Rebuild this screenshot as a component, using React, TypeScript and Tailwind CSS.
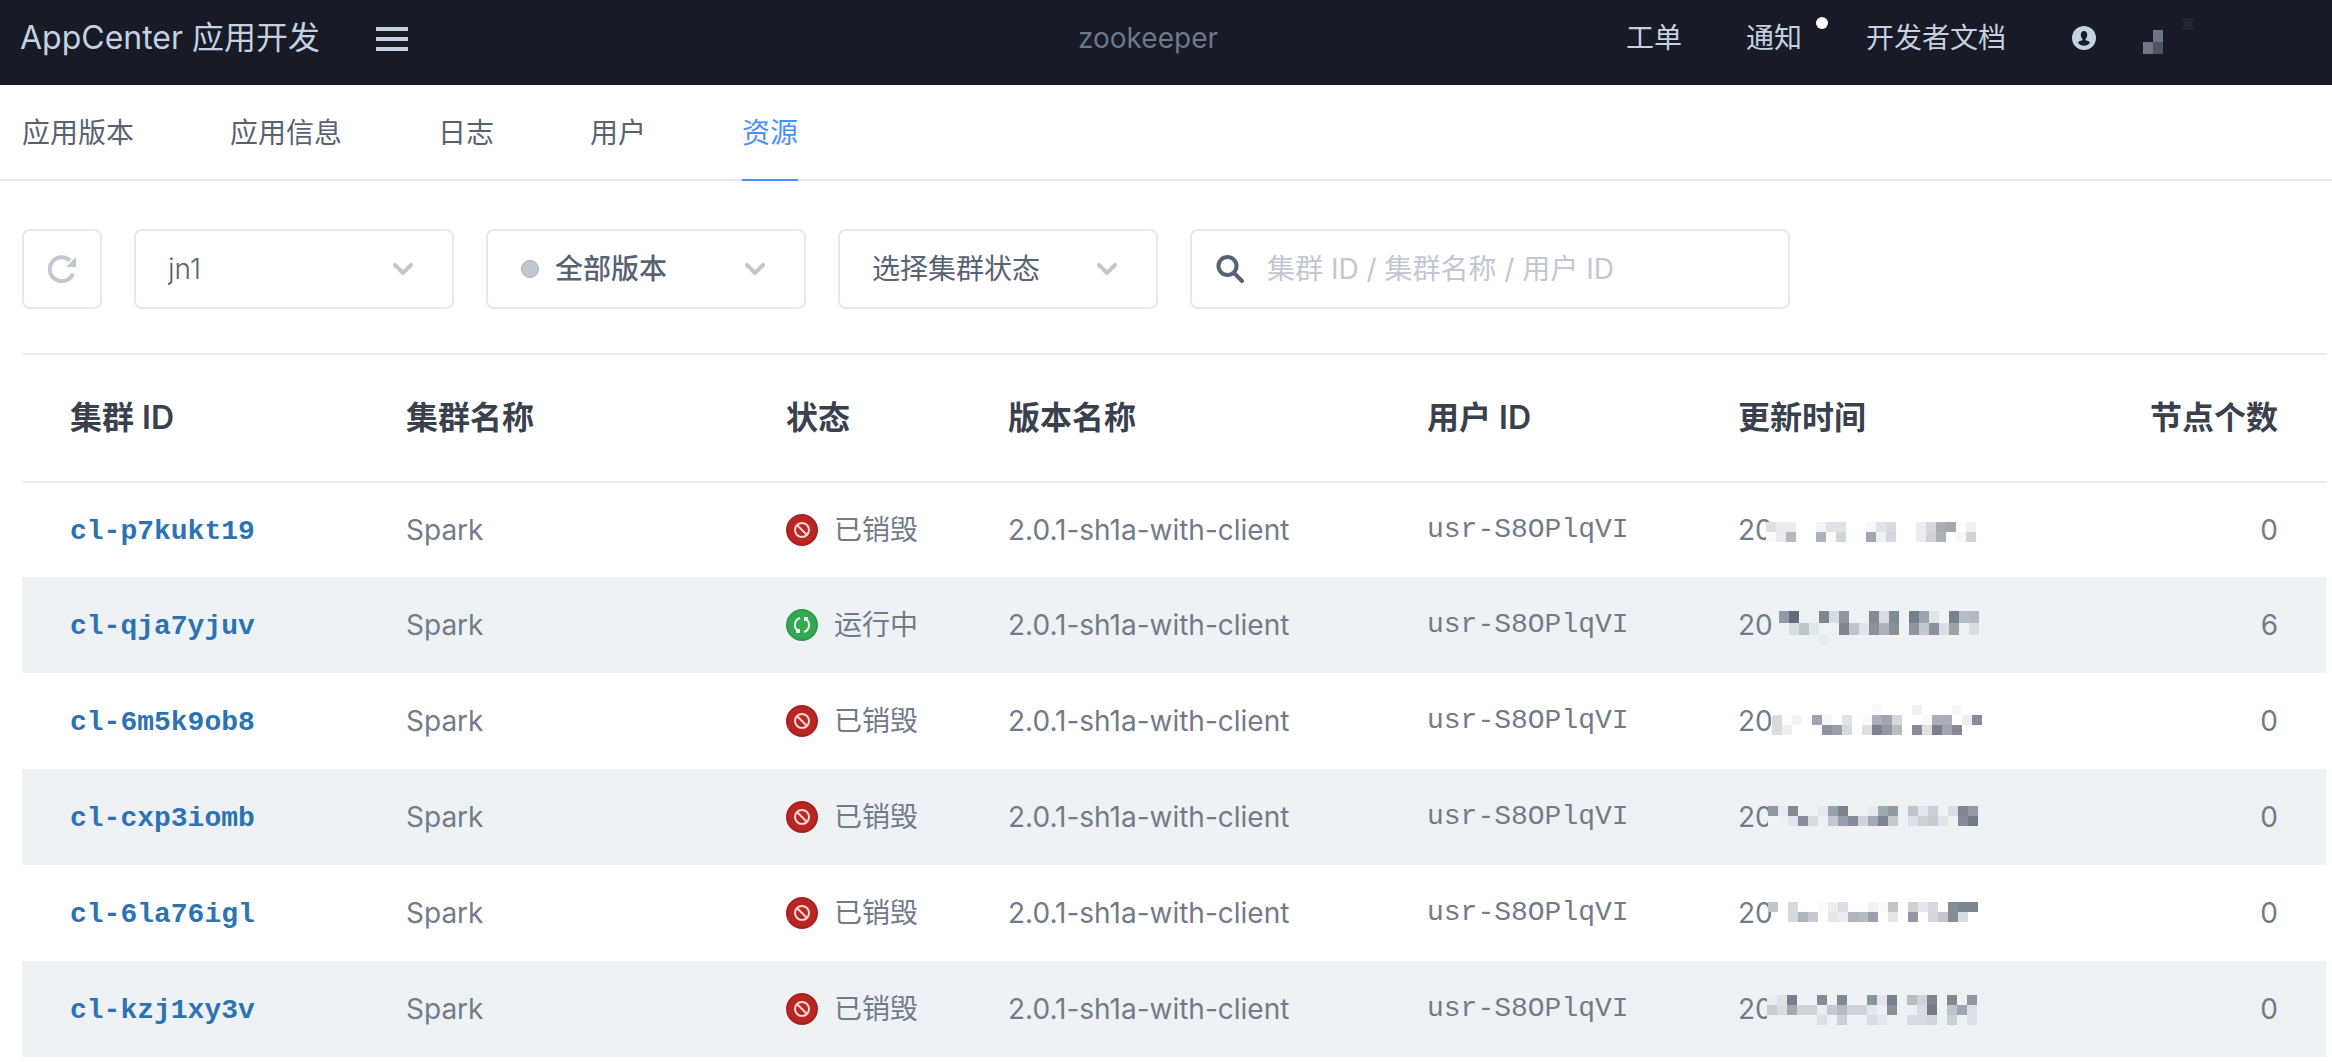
import React from "react";

const sans = "font-['Inter','Noto_Sans_CJK_SC',sans-serif]";
const mono = "font-['Liberation_Mono',monospace]";

type Mosaic = { x: number; y: number; h: number; lines: string[] };

type Cluster = {
  id: string;
  status: "ceased" | "active";
  nodes: number;
  mask: Mosaic;
};

const clusters: Cluster[] = [
  {
    id: "cl-p7kukt19",
    status: "ceased",
    nodes: 0,
    mask: {
      x: 28,
      y: 12,
      h: 10,
      lines: [
        "dfe0e4 ebecee ebecee - - f3f4f7 e0e2e6 e0e2e6 - - f7f8fb e0e2e7 dad9df - - ebecf0 d4d8dd a8aeb2 a2a7b0 fbfefc f0f0f0",
        "f8fbfa ebebed b6babe - - adb1ba f8fbfa d0d4da - - 9ea6af eff0f2 d4d7de - - ebebf0 cfd3d7 abb1b5 - f6f7fb cfd4d8",
      ],
    },
  },
  {
    id: "cl-qja7yjuv",
    status: "active",
    nodes: 6,
    mask: {
      x: 31,
      y: 6,
      h: 12,
      lines: [
        "- 939aa5 616b79 - - 808790 d8dbe0 8e959f - - 808a92 dadbe1 808a92 - 767d8b 9da2ad dfe4e8 f0f2f6 76828e b5bec8 b4b9c1",
        "- - d8dde1 bfc3cc e2e7ec eff3f3 - 7e8490 bfc3cc e2e4e9 8b919b adb1ba 869096 - 9195a2 c4c8cf 8b929d dadee3 9ba4aa eff1f5 d8dee6",
        "- - - - - e5ecee",
      ],
    },
  },
  {
    id: "cl-6m5k9ob8",
    status: "ceased",
    nodes: 0,
    mask: {
      x: 34,
      y: 4,
      h: 10,
      lines: [
        "- - - - - - - - - - fafafc - - - f0f1f4 - - - f5f6f6",
        "d8dbdd - f5f5f6 - 9fa5af f5f8f7 - dfe4e7 - fafbfb abb1ba a1a5ae d6d8db - - f9fbf9 a9b0b8 abaeb6 - eeeeef 858b98",
        "d8dbdd edeff2 - - - 8d949f 9b9faa d6dadd - dfe0e4 7d828f 9297a2 b9bdc0 - 868e9b e0e0e1 7c808d a1a5af 848996",
      ],
    },
  },
  {
    id: "cl-cxp3iomb",
    status: "ceased",
    nodes: 0,
    mask: {
      x: 30,
      y: 9,
      h: 10,
      lines: [
        "8f98a0 e7eaee 838998 - - e6eaee 9aa1ac 7b818d - - e6eaee a2a9b1 929aa4 - c0c4cf e3e6ea cbcfd3 - dadde2 7f8592 9699a6",
        "eff2f6 - e3e6ea 898c9c d6dcdf - c4c8d1 989fa8 868b99 d0d3d9 a2aab3 7e848f c5cacf - dde2e6 cdd1d5 c7cbd4 e4e5e9 - 868c97 737986",
      ],
    },
  },
  {
    id: "cl-6la76igl",
    status: "ceased",
    nodes: 0,
    mask: {
      x: 30,
      y: 9,
      h: 10,
      lines: [
        "c2c6cb - d6dade - - fafafb ecedee dadee2 - - eff3f5 f7fafb c1c5ca - ccd1d5 e5e6e9 d6dae3 - 868f98 7d8690 7b858f",
        "- - d6dade b0b4bd c7cbce - e3e8ec ededef b0b4bd b6bbc0 9ba1aa - e5e9eb - 9398a3 - d5d9de c6c6cd 858d98 d9dce0",
      ],
    },
  },
  {
    id: "cl-kzj1xy3v",
    status: "ceased",
    nodes: 0,
    mask: {
      x: 29,
      y: 6,
      h: 10,
      lines: [
        "e9edf1 dfe2e7 76808c - - 848d96 - 7f8a92 - - 8b939d e2e5ea 77808c - b8bdc4 cfd3d7 7d858f - 7f8a90 - 9097a3",
        "c8ccd5 d9dce0 a2a9b1 cfd2d8 cfd2d8 e9edf0 c5cad0 b5bcc0 cfd3d8 cfd2d8 e3e6eb eceff3 8b919c - eceff3 d8dbe0 747a89 - bfc3cd a0a4af dddfe5",
        "eff2f5 - - - - dae0e3 - cbd0d5 - - d8dde1 e4e7eb - - d8dbe0 d8dbe0 d3d6dc - cbd0d6 - dde0e4",
      ],
    },
  },
];

function MaskedTime({ mask }: { mask: Mosaic }) {
  return (
    <div className="relative flex h-10 items-center">
      20
      <svg
        className="absolute top-0 left-0"
        width="250"
        height="40"
        viewBox="0 0 250 40"
        shapeRendering="crispEdges"
        aria-hidden="true"
      >
        {mask.lines.map((line, r) =>
          line.split(" ").map((c, k) =>
            c === "-" ? null : (
              <rect
                key={`${r}-${k}`}
                x={mask.x + k * 10}
                y={mask.y + r * mask.h}
                width="10"
                height={mask.h}
                fill={`#${c}`}
              />
            ),
          ),
        )}
      </svg>
    </div>
  );
}

function StatusIcon({ status }: { status: Cluster["status"] }) {
  if (status === "active") {
    return (
      <svg width="32" height="32" viewBox="0 0 32 32" fill="none" aria-hidden="true">
        <circle cx="16" cy="16" r="15" fill="#34a853" stroke="#2c9a49" strokeWidth="2" />
        <path
          d="M14 9 A7.3 7.3 0 0 0 11.5 21.5 M18 23 A7.3 7.3 0 0 0 20.5 10.5"
          stroke="#f2fbf4"
          strokeWidth="2"
        />
        <path d="M18 8h4v4h-4z M10 20h4v4h-4z" fill="#f2fbf4" />
      </svg>
    );
  }
  return (
    <svg width="32" height="32" viewBox="0 0 32 32" fill="none" aria-hidden="true">
      <circle cx="16" cy="16" r="15" fill="#b82723" stroke="#a9201d" strokeWidth="2" />
      <circle cx="16" cy="16" r="7" stroke="#f6d9d8" strokeWidth="2" />
      <path d="M11 11l10 10" stroke="#f6d9d8" strokeWidth="2" />
    </svg>
  );
}

function Chevron() {
  return (
    <svg
      className="pointer-events-none absolute top-1/2 right-[41px] -translate-y-1/2"
      width="20"
      height="12"
      viewBox="0 0 20 12"
      fill="none"
      aria-hidden="true"
    >
      <path
        d="M2 2l8 8 8-8"
        stroke="#c1c8d1"
        strokeWidth="4"
        strokeLinecap="round"
        strokeLinejoin="round"
      />
    </svg>
  );
}

function Filter({
  label,
  value,
  dot = false,
  className,
}: {
  label: string;
  value: string;
  dot?: boolean;
  className: string;
}) {
  return (
    <div className="relative w-80">
      {dot && (
        <span className="pointer-events-none absolute top-1/2 left-[35px] size-[18px] -translate-y-1/2 rounded-full border border-[#a4adb8] bg-[#c1c8d1]" />
      )}
      <select
        aria-label={label}
        className={`h-20 w-full appearance-none rounded-lg border-2 border-[#e5e9ee] bg-white text-[28px] text-[#576372] outline-none ${className}`}
      >
        <option>{value}</option>
      </select>
      <Chevron />
    </div>
  );
}

const tabs = ["应用版本", "应用信息", "日志", "用户", "资源"];

export default function App() {
  return (
    <div className={`min-h-screen bg-white text-[28px] leading-10 ${sans}`} lang="zh-CN">
      <header className="grid h-[85px] grid-cols-[1fr_auto_1fr] items-center bg-[#181a26] pr-14 pb-[9px] pl-5 text-[#c3d1e0]">
        <div className="flex items-center gap-14">
          <h1 className="text-[32px] whitespace-nowrap">AppCenter 应用开发</h1>
          <button type="button" aria-label="菜单" className="mt-[2px] flex w-8 flex-col gap-[6px]">
            <span className="h-1 bg-[#c3d1e0]" />
            <span className="h-1 bg-[#c3d1e0]" />
            <span className="h-1 bg-[#c3d1e0]" />
          </button>
        </div>
        <p className="text-[#6f7886]">zookeeper</p>
        <nav className="flex items-center justify-end gap-16 pr-[83px] whitespace-nowrap">
          <a href="#tickets">工单</a>
          <a href="#notices" className="relative">
            通知
            <span className="absolute -top-px -right-[26px] size-3 rounded-full bg-white" />
          </a>
          <a href="#docs">开发者文档</a>
          <a href="#account" aria-label="账户" className="flex items-center gap-[47px] pl-[2px]">
            <svg width="24" height="24" viewBox="0 0 24 24" aria-hidden="true">
              <circle cx="12" cy="12" r="12" fill="#c3d1e0" />
              <path
                d="M12 5c-2 0-3.200 1.500-3.200 3.700 0 1.900.7 3.300 1.700 4.200v1.300c-2.400.5-4.500 1.300-4.500 2.600 1.500 1.900 3.600 3 6 3s4.500-1.100 6-3c0-1.300-2.100-2.100-4.500-2.600v-1.300c1-.9 1.700-2.300 1.700-4.200C15.200 6.500 14 5 12 5z"
                fill="#181a26"
              />
            </svg>
            <svg
              width="50"
              height="40"
              viewBox="0 0 50 40"
              shapeRendering="crispEdges"
              aria-hidden="true"
            >
              <path d="M40 0h10v12H40z" fill="#232532" />
              <path d="M10 12h10v12H10z" fill="#6e7385" />
              <path d="M0 24h10v12H0z" fill="#6f7887" />
              <path d="M10 24h10v12H10z" fill="#505566" />
            </svg>
          </a>
        </nav>
      </header>

      <nav className="flex h-24 gap-24 border-b-2 border-[#e5e9ee] px-[22px] text-[#576372]">
        {tabs.map((tab) => (
          <a
            key={tab}
            href={`#${tab}`}
            className={
              tab === "资源"
                ? "-mb-[2px] border-b-2 border-[#4791ff] pt-7 text-[#4791ff]"
                : "pt-7"
            }
          >
            {tab}
          </a>
        ))}
      </nav>

      <main className="pt-12 pr-[6px] pl-[22px]">
        <form className="flex gap-8">
          <button
            type="button"
            aria-label="刷新"
            className="flex size-20 items-center justify-center rounded-lg border-2 border-[#e5e9ee] bg-white"
          >
            <svg width="28" height="28" viewBox="0 0 28 28" fill="none" aria-hidden="true">
              <path
                d="M25 18.500A12 12 0 1 1 22 5.500"
                stroke="#c1c8d1"
                strokeWidth="4"
              />
              <path d="M28 2v10H18z" fill="#c1c8d1" />
            </svg>
          </button>
          <Filter label="区域" value="jn1" className="pl-8 font-light" />
          <Filter label="版本" value="全部版本" dot className="pl-[67px] font-medium" />
          <Filter label="集群状态" value="选择集群状态" className="pl-8" />
          <div className="relative w-[600px]">
            <svg
              className="pointer-events-none absolute top-1/2 left-[26px] -translate-y-1/2"
              width="28"
              height="28"
              viewBox="0 0 28 28"
              fill="none"
              aria-hidden="true"
            >
              <circle cx="11.500" cy="11" r="9" stroke="#576372" strokeWidth="4" />
              <path d="M18 18l8 8" stroke="#576372" strokeWidth="4" strokeLinecap="round" />
            </svg>
            <input
              type="search"
              aria-label="搜索集群"
              placeholder="集群 ID / 集群名称 / 用户 ID"
              className="h-20 w-full rounded-lg border-2 border-[#e5e9ee] bg-white pr-8 pl-[75px] text-[28px] text-[#576372] outline-none placeholder:text-[#c1c8d1]"
            />
          </div>
        </form>

        <table className="mt-11 w-full table-fixed border-separate border-spacing-0 text-left whitespace-nowrap text-[#717b8a]">
          <colgroup>
            <col className="w-[336px]" />
            <col className="w-[380px]" />
            <col className="w-[222px]" />
            <col className="w-[419px]" />
            <col className="w-[311px]" />
            <col />
            <col className="w-[240px]" />
          </colgroup>
          <thead>
            <tr className="h-32 text-[32px] text-[#3a414d] [&>th]:border-t-2 [&>th]:border-[#e9edf0] [&>th]:p-0 [&>th]:pl-12 [&>th]:font-semibold">
              <th scope="col">集群 ID</th>
              <th scope="col">集群名称</th>
              <th scope="col">状态</th>
              <th scope="col">版本名称</th>
              <th scope="col">用户 ID</th>
              <th scope="col">更新时间</th>
              <th scope="col" className="pr-12! text-right">
                节点个数
              </th>
            </tr>
          </thead>
          <tbody>
            {clusters.map((c) => (
              <tr
                key={c.id}
                className="h-24 even:bg-[#eef2f5] first:[&>td]:border-t-2 first:[&>td]:border-[#e9edf0] [&>td]:p-0 [&>td]:pl-12"
              >
                <td>
                  <a href={`#${c.id}`} className={`font-bold text-[#2b73b3] ${mono}`}>
                    {c.id}
                  </a>
                </td>
                <td>Spark</td>
                <td>
                  <div className="flex items-center gap-4">
                    <StatusIcon status={c.status} />
                    {c.status === "active" ? "运行中" : "已销毁"}
                  </div>
                </td>
                <td>2.0.1-sh1a-with-client</td>
                <td className={mono}>usr-S8OPlqVI</td>
                <td>
                  <MaskedTime mask={c.mask} />
                </td>
                <td className="pr-12! text-right">{c.nodes}</td>
              </tr>
            ))}
          </tbody>
        </table>
      </main>
    </div>
  );
}
